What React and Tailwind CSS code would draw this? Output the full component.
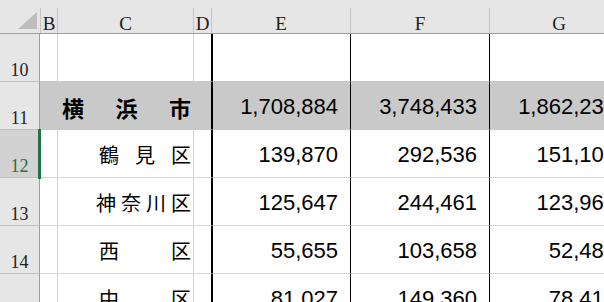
import React from "react";

const rows = [
  { n: "10", blank: true },
  { n: "11", name: ["横", "浜", "市"], nameW: "w-[129px]", bold: true, e: "1,708,884", f: "3,748,433", g: "1,862,234", fill: true },
  { n: "12", name: ["鶴", "見", "区"], nameW: "w-[92px]", e: "139,870", f: "292,536", g: "151,104", active: true },
  { n: "13", name: ["神", "奈", "川", "区"], nameW: "w-[95px]", e: "125,647", f: "244,461", g: "123,962" },
  { n: "14", name: ["西", "区"], nameW: "w-[92px]", e: "55,655", f: "103,658", g: "52,481" },
  { n: "15", name: ["中", "区"], nameW: "w-[92px]", e: "81,027", f: "149,360", g: "78,415" },
];

const serif = { fontFamily: '"Liberation Serif", serif' };
const num = { fontFamily: '"Liberation Sans", Arial, sans-serif' };
const jp = { fontFamily: '"Noto Sans CJK JP", sans-serif' };

function HeaderRow() {
  return (
    <div className="flex h-[34px] shrink-0 border-b border-[#9f9f9f] bg-[#e6e6e6] text-[19px] leading-none text-[#222]" style={serif}>
      <div className="w-[40px] shrink-0">
        <svg width="40" height="33" viewBox="0 0 40 33">
          <polygon points="18,29 37,29 37,12" fill="#bdbdbd" />
        </svg>
      </div>
      <div className="w-[18px] h-[25px] self-end shrink-0 border-x border-[#c4c4c4] flex items-end justify-center">B</div>
      <div className="w-[136px] h-[25px] self-end shrink-0 border-r border-[#c4c4c4] flex items-end justify-center">C</div>
      <div className="w-[18px] h-[25px] self-end shrink-0 border-r border-[#c4c4c4] flex items-end justify-center">D</div>
      <div className="w-[139px] h-[25px] self-end shrink-0 border-r border-[#c4c4c4] flex items-end justify-center">E</div>
      <div className="w-[139px] h-[25px] self-end shrink-0 border-r border-[#c4c4c4] flex items-end justify-center">F</div>
      <div className="w-[139px] h-[25px] self-end shrink-0 border-r border-[#c4c4c4] flex items-end justify-center">G</div>
    </div>
  );
}

function BodyRow({ row, nextFill }) {
  const fill = row.fill ? "bg-[#c9c9c9]" : "bg-white";
  const gb = nextFill || row.fill ? "border-b-[#c9c9c9]" : "border-b-[#d4d4d4]";
  const gr = row.fill ? "border-r-[#c9c9c9]" : "border-r-[#d4d4d4]";
  return (
    <div className="flex h-[48px] shrink-0">
      <div
        className={`w-[40px] shrink-0 border-r border-b border-r-[#9f9f9f] border-b-[#c2c2c2] flex items-end justify-center pb-[2px] text-[18px] leading-none ${
          row.active ? "bg-[#d2d2d2] text-[#217346]" : "bg-[#e6e6e6] text-[#222]"
        }`}
        style={serif}
      >
        {row.n}
      </div>
      <div className={`w-[18px] shrink-0 border-r border-b ${gr} ${gb} ${fill}`} />
      <div className={`w-[136px] shrink-0 border-r border-b ${gr} ${gb} ${fill} flex items-center justify-end pr-[2px] pt-[3px]`}>
        {row.name && (
          <div
            className={`${row.nameW} flex justify-between leading-none text-black ${row.bold ? "text-[22px] font-bold" : "text-[20px]"}`}
            style={jp}
          >
            {row.name.map((c, i) => (
              <span key={i}>{c}</span>
            ))}
          </div>
        )}
      </div>
      <div className={`w-[19px] shrink-0 border-r-2 border-b border-r-black ${gb} ${fill}`} />
      <div className={`w-[138px] shrink-0 border-r border-b border-r-black ${gb} ${fill} flex items-center justify-end pr-[12px] pt-[3px] text-[22px] leading-none text-black`} style={num}>
        {row.e}
      </div>
      <div className={`w-[139px] shrink-0 border-r border-b border-r-black ${gb} ${fill} flex items-center justify-end pr-[12px] pt-[3px] text-[22px] leading-none text-black`} style={num}>
        {row.f}
      </div>
      <div className={`w-[139px] shrink-0 border-r border-b ${gr} ${gb} ${fill} flex items-center justify-end pr-[12px] pt-[3px] text-[22px] leading-none text-black`} style={num}>
        {row.g}
      </div>
    </div>
  );
}

export default function App() {
  return (
    <div className="relative w-[604px] h-[302px] overflow-hidden bg-white">
      <div className="flex flex-col w-[700px]">
        <HeaderRow />
        {rows.map((r, i) => (
          <BodyRow key={r.n} row={r} nextFill={rows[i + 1] && rows[i + 1].fill} />
        ))}
      </div>
      {/* active row marker */}
      <div className="absolute left-[38px] top-[129px] w-[3px] h-[50px] bg-[#217346]" />
    </div>
  );
}
